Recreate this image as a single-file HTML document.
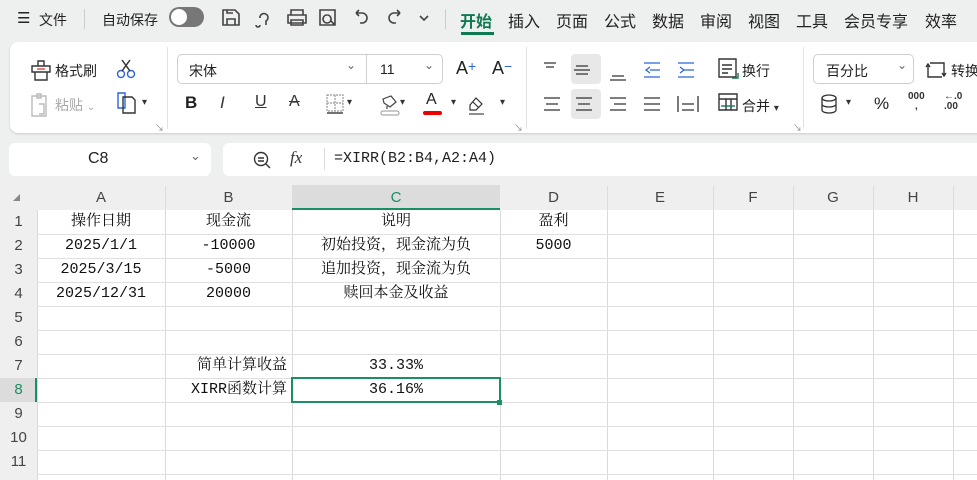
<!DOCTYPE html>
<html><head><meta charset="utf-8"><style>
*{margin:0;padding:0;box-sizing:border-box}
body{width:977px;height:480px;overflow:hidden;background:#eef0ef;font-family:"Liberation Sans","Noto Sans CJK SC",sans-serif;color:#222;position:relative}
.a{position:absolute;white-space:nowrap}
.t{font-size:15px;color:#222}
.ic{position:absolute}
.serif{font-family:"Liberation Mono","Noto Serif CJK SC",serif;font-size:15px;color:#111}
.cell{position:absolute;height:24px;line-height:24px;text-align:center}
.vl{position:absolute;width:1px;background:#dadada;top:210px;height:270px}
.hl{position:absolute;height:1px;background:#e0e0e0;left:37px;width:940px}
.rh{position:absolute;left:0;width:37px;text-align:center;font-size:15px;color:#444;height:24px;line-height:24px}
.ch{position:absolute;top:186px;height:24px;line-height:24px;text-align:center;font-size:15px;color:#444}
.dd{font-size:10px;color:#333}
.tab{position:absolute;top:8px;font-size:16px;color:#222}
</style></head><body>
<!-- top bar -->
<div class="a t" style="left:17px;top:9px;font-size:15px">☰</div>
<div class="a t" style="left:39px;top:10px;font-size:14px">文件</div>
<div class="a" style="left:84px;top:9px;width:1px;height:20px;background:#ccc"></div>
<div class="a t" style="left:102px;top:10px;font-size:14px">自动保存</div>
<div class="a" style="left:169px;top:7px;width:35px;height:20px;border-radius:10px;background:#777"><div style="position:absolute;left:2px;top:2px;width:16px;height:16px;border-radius:8px;background:#fff"></div></div>
<svg class="ic" style="left:220px;top:5px" width="220" height="24" fill="none" stroke="#444" stroke-width="1.6">
<path d="M3 5h12l4 4v11H3z M7 20v-6h8v6 M7 5v3h6"/>
<path d="M40 12a4 4 0 1 1 6 4v4 M40 13v-2 M36 20a2 2 0 1 0 4 0"/>
<path d="M68 10h18v8H68z M71 10V5h12v5 M71 15h12v5H71z"/>
<path d="M100 5h15v15h-15z M107 10a4 4 0 1 0 0.1 0 M111 16l4 4"/>
<path d="M136 8h6a5 5 0 0 1 0 10h-2 M136 8l3-3 M136 8l3 3"/>
<path d="M180 8h-6a5 5 0 0 0 0 10h2 M180 8l-3-3 M180 8l-3 3"/>
<path d="M200 11l4 4 4-4"/>
</svg>
<div class="a" style="left:445px;top:9px;width:1px;height:20px;background:#ccc"></div>
<div class="a" style="left:460px;top:8px;font-size:16px;color:#0e7a52;font-weight:bold">开始</div>
<div class="a" style="left:461px;top:32px;width:33px;height:3px;background:#0e7a52"></div>
<div class="tab" style="left:508px">插入</div>
<div class="tab" style="left:556px">页面</div>
<div class="tab" style="left:604px">公式</div>
<div class="tab" style="left:652px">数据</div>
<div class="tab" style="left:700px">审阅</div>
<div class="tab" style="left:748px">视图</div>
<div class="tab" style="left:796px">工具</div>
<div class="tab" style="left:844px">会员专享</div>
<div class="tab" style="left:925px">效率</div>
<!-- ribbon -->
<div class="a" style="left:10px;top:42px;width:980px;height:91px;background:#fff;border-radius:8px;box-shadow:0 1px 2px rgba(0,0,0,.15)"></div>
<svg class="ic" style="left:30px;top:58px" width="140" height="60" fill="none" stroke="#333" stroke-width="1.4">
<path d="M2 8h18v6H2z M8 8V3h6v5 M5 14v8h12v-8"/><path d="M7 11h8" stroke="#d44"/>
<circle cx="91" cy="16" r="3.5" stroke="#2a66d9"/><circle cx="101" cy="16" r="3.5" stroke="#2a66d9"/><path d="M92 13l8-11 M100 13L92 2"/>
<path d="M2 38h14v20H2z M7 36h4v4H7z M9 46h5v10H9" stroke="#bbb"/>
<path d="M88 35h7v15h-7z" stroke="#2a66d9"/><path d="M93 39h9l3 3v13H93z"/>
</svg>
<div class="a t" style="left:55px;top:61px;font-size:14px">格式刷</div>
<div class="a" style="left:55px;top:95px;font-size:14px;color:#aaa">粘贴 <span style="font-size:10px">⌄</span></div>
<div class="a dd" style="left:142px;top:97px">▾</div>
<div class="a" style="left:155px;top:121px;font-size:9px;color:#888">↘</div>
<div class="a" style="left:167px;top:47px;width:1px;height:82px;background:#e2e2e2"></div>
<div class="a" style="left:177px;top:54px;width:266px;height:30px;border:1px solid #cfcfcf;border-radius:5px"></div>
<div class="a" style="left:366px;top:54px;width:1px;height:30px;background:#cfcfcf"></div>
<div class="a t" style="left:189px;top:61px;font-size:14px">宋体</div>
<div class="a" style="left:346px;top:58px;color:#666;font-size:12px">⌄</div>
<div class="a t" style="left:380px;top:61px;font-size:14px">11</div>
<div class="a" style="left:424px;top:58px;color:#666;font-size:12px">⌄</div>
<div class="a t" style="left:456px;top:58px;font-size:18px">A<span style="color:#2a66d9;font-size:14px;vertical-align:top">+</span></div>
<div class="a t" style="left:492px;top:58px;font-size:18px">A<span style="color:#2a66d9;font-size:14px;vertical-align:top">−</span></div>
<div class="a" style="left:185px;top:93px;font-size:17px;font-weight:bold;color:#222">B</div>
<div class="a" style="left:220px;top:93px;font-size:17px;font-style:italic;color:#333">I</div>
<div class="a" style="left:255px;top:93px;font-size:16px;text-decoration:underline;color:#333">U</div>
<div class="a" style="left:289px;top:93px;font-size:16px;text-decoration:line-through;color:#333">A</div>
<svg class="ic" style="left:325px;top:93px" width="200" height="24" fill="none" stroke="#999" stroke-width="1.2">
<path d="M2 2h16v16H2z M10 2v16 M2 10h16" stroke-dasharray="2 1"/><path d="M2 20h16" stroke="#444" stroke-width="1.5"/>
<path d="M58 6l8-3 5 6-6 5-6-4z M62 13v3" stroke="#444"/><rect x="56" y="18" width="18" height="4" rx="2" stroke="#aaa"/>
<rect x="98" y="18" width="19" height="4" rx="2" fill="#e00" stroke="none"/>
<path d="M145 12l6-7 6 6-6 6h-6z M148 9l6 6" stroke="#333"/><path d="M144 21h15" stroke="#444"/>
</svg>
<div class="a t" style="left:426px;top:91px;font-size:16px">A</div>
<div class="a dd" style="left:347px;top:97px">▾</div><div class="a dd" style="left:400px;top:97px">▾</div><div class="a dd" style="left:451px;top:97px">▾</div><div class="a dd" style="left:500px;top:97px">▾</div>
<div class="a" style="left:514px;top:121px;font-size:9px;color:#888">↘</div>
<div class="a" style="left:526px;top:47px;width:1px;height:82px;background:#e2e2e2"></div>
<div class="a" style="left:571px;top:54px;width:30px;height:30px;background:#e8e8e8;border-radius:4px"></div>
<div class="a" style="left:571px;top:89px;width:30px;height:30px;background:#e8e8e8;border-radius:4px"></div>
<svg class="ic" style="left:540px;top:58px" width="180" height="60" fill="none" stroke="#333" stroke-width="1.3">
<path d="M4 5h12 M6 9h8 M36 8h12 M34 12h16 M36 16h12 M72 18h12 M70 22h16"/>
<path d="M104 5h16 M110 12h10 M104 19h16 M110 9l-4 3 4 3" stroke="#2a66d9"/>
<path d="M138 5h16 M144 12h10 M138 19h16 M140 9l4 3-4 3" stroke="#2a66d9"/>
<path d="M4 40h16 M6 46h12 M4 52h16 M36 40h16 M38 46h12 M36 52h16 M70 40h16 M74 46h12 M70 52h16 M104 40h16 M104 46h16 M104 52h16 M138 38v16 M158 38v16 M142 52h12 M142 46h12"/>
</svg>
<svg class="ic" style="left:716px;top:56px" width="30" height="60" fill="none" stroke="#333" stroke-width="1.4">
<path d="M3 3h17v18H3z M6 9h10 M6 13h10 M6 17h6"/><path d="M16 22h6v-5" stroke="#0e7a52"/>
<path d="M3 38h18v16H3z M3 43h18 M10 43v11 M15 43v11"/><path d="M5 50h14" stroke="#0e7a52"/>
</svg>
<div class="a t" style="left:742px;top:61px;font-size:14px">换行</div>
<div class="a t" style="left:742px;top:96px;font-size:14px">合并 <span class="dd">▾</span></div>
<div class="a" style="left:793px;top:121px;font-size:9px;color:#888">↘</div>
<div class="a" style="left:803px;top:47px;width:1px;height:82px;background:#e2e2e2"></div>
<div class="a" style="left:813px;top:54px;width:101px;height:30px;border:1px solid #cfcfcf;border-radius:5px"></div>
<div class="a t" style="left:826px;top:61px;font-size:14px">百分比</div>
<div class="a" style="left:897px;top:58px;color:#666;font-size:12px">⌄</div>
<svg class="ic" style="left:925px;top:59px" width="22" height="22" fill="none" stroke="#333" stroke-width="1.4"><path d="M5 4h14v12 M17 14l2 3 2-3 M17 18H3V6 M1 8l2-3 2 3"/></svg>
<div class="a t" style="left:951px;top:61px;font-size:14px">转换</div>
<svg class="ic" style="left:820px;top:94px" width="20" height="22" fill="none" stroke="#333" stroke-width="1.3"><ellipse cx="9" cy="4" rx="7" ry="3"/><path d="M2 4v12c0 4 14 4 14 0V4 M2 10c0 4 14 4 14 0"/></svg>
<div class="a dd" style="left:846px;top:97px">▾</div>
<div class="a t" style="left:874px;top:94px;font-size:17px">%</div>
<div class="a" style="left:908px;top:92px;font-size:10px;font-weight:bold;color:#333;line-height:10px;text-align:center">000<br>,</div>
<div class="a" style="left:944px;top:92px;font-size:10px;font-weight:bold;color:#333;line-height:10px">←.0<br>.00</div>
<!-- formula bar -->
<div class="a" style="left:9px;top:143px;width:202px;height:33px;background:#fff;border-radius:6px"></div>
<div class="a" style="left:88px;top:150px;font-size:16px;color:#222">C8</div>
<div class="a" style="left:190px;top:148px;color:#666;font-size:13px">⌄</div>
<div class="a" style="left:223px;top:143px;width:760px;height:33px;background:#fff;border-radius:6px 0 0 6px"></div>
<svg class="ic" style="left:252px;top:150px" width="20" height="20" fill="none" stroke="#333" stroke-width="1.4"><circle cx="9" cy="9" r="6.5"/><path d="M6 8h6 M6 11h6 M14 14l4 4"/></svg>
<div class="a" style="left:290px;top:148px;font-size:17px;font-style:italic;font-family:'Liberation Serif',serif;color:#333">fx</div>
<div class="a" style="left:324px;top:148px;width:1px;height:22px;background:#ddd"></div>
<div class="a" style="left:334px;top:150px;font-family:'Liberation Mono',monospace;font-size:15px;color:#222">=XIRR(B2:B4,A2:A4)</div>
<!-- grid -->
<div class="a" style="left:0;top:177px;width:977px;height:33px;background:#efefef"></div>
<div class="a" style="left:0;top:210px;width:37px;height:270px;background:#efefef"></div>
<div class="a" style="left:37px;top:210px;width:940px;height:270px;background:#fff"></div>
<div class="a" style="left:292px;top:185px;width:208px;height:25px;background:#dcdcdc"></div>
<div class="a" style="left:292px;top:208px;width:208px;height:2px;background:#1a8f62"></div>
<div class="a" style="left:0;top:378px;width:37px;height:24px;background:#dcdcdc"></div>
<div class="a" style="left:35px;top:378px;width:2px;height:24px;background:#1a8f62"></div>
<div class="a" style="left:13px;top:194px;width:0;height:0;border-left:7px solid transparent;border-bottom:7px solid #888"></div>
<div class="ch" style="left:37px;width:128px">A</div>
<div class="ch" style="left:165px;width:127px">B</div>
<div class="ch" style="left:292px;width:208px;color:#1a8f62">C</div>
<div class="ch" style="left:500px;width:107px">D</div>
<div class="ch" style="left:607px;width:106px">E</div>
<div class="ch" style="left:713px;width:80px">F</div>
<div class="ch" style="left:793px;width:80px">G</div>
<div class="ch" style="left:873px;width:80px">H</div>
<div class="a" style="left:165px;top:186px;width:1px;height:24px;background:#ddd"></div>
<div class="a" style="left:607px;top:186px;width:1px;height:24px;background:#ddd"></div>
<div class="a" style="left:713px;top:186px;width:1px;height:24px;background:#ddd"></div>
<div class="a" style="left:793px;top:186px;width:1px;height:24px;background:#ddd"></div>
<div class="a" style="left:873px;top:186px;width:1px;height:24px;background:#ddd"></div>
<div class="a" style="left:953px;top:186px;width:1px;height:24px;background:#ddd"></div>
<div class="vl" style="left:37px"></div><div class="vl" style="left:165px"></div><div class="vl" style="left:292px"></div><div class="vl" style="left:500px"></div><div class="vl" style="left:607px"></div><div class="vl" style="left:713px"></div><div class="vl" style="left:793px"></div><div class="vl" style="left:873px"></div><div class="vl" style="left:953px"></div>
<div class="hl" style="top:234px"></div><div class="hl" style="top:258px"></div><div class="hl" style="top:282px"></div><div class="hl" style="top:306px"></div><div class="hl" style="top:330px"></div><div class="hl" style="top:354px"></div><div class="hl" style="top:378px"></div><div class="hl" style="top:402px"></div><div class="hl" style="top:426px"></div><div class="hl" style="top:450px"></div><div class="hl" style="top:474px"></div>
<div class="rh" style="top:210px">1</div><div class="rh" style="top:234px">2</div><div class="rh" style="top:258px">3</div><div class="rh" style="top:282px">4</div><div class="rh" style="top:306px">5</div><div class="rh" style="top:330px">6</div><div class="rh" style="top:354px">7</div><div class="rh" style="top:378px;color:#1a8f62">8</div><div class="rh" style="top:402px">9</div><div class="rh" style="top:426px">10</div><div class="rh" style="top:450px">11</div>
<div class="cell serif" style="left:37px;width:128px;top:210px">操作日期</div>
<div class="cell serif" style="left:165px;width:127px;top:210px">现金流</div>
<div class="cell serif" style="left:292px;width:208px;top:210px">说明</div>
<div class="cell serif" style="left:500px;width:107px;top:210px">盈利</div>
<div class="cell serif" style="left:37px;width:128px;top:234px">2025/1/1</div>
<div class="cell serif" style="left:165px;width:127px;top:234px">-10000</div>
<div class="cell serif" style="left:292px;width:208px;top:234px">初始投资，现金流为负</div>
<div class="cell serif" style="left:500px;width:107px;top:234px">5000</div>
<div class="cell serif" style="left:37px;width:128px;top:258px">2025/3/15</div>
<div class="cell serif" style="left:165px;width:127px;top:258px">-5000</div>
<div class="cell serif" style="left:292px;width:208px;top:258px">追加投资，现金流为负</div>
<div class="cell serif" style="left:37px;width:128px;top:282px">2025/12/31</div>
<div class="cell serif" style="left:165px;width:127px;top:282px">20000</div>
<div class="cell serif" style="left:292px;width:208px;top:282px">赎回本金及收益</div>
<div class="cell serif" style="left:165px;width:122px;top:354px;text-align:right">简单计算收益</div>
<div class="cell serif" style="left:292px;width:208px;top:354px">33.33%</div>
<div class="cell serif" style="left:165px;width:122px;top:378px;text-align:right">XIRR函数计算</div>
<div class="cell serif" style="left:292px;width:208px;top:378px">36.16%</div>
<div class="a" style="left:291px;top:377px;width:210px;height:26px;border:2px solid #1a8f62"></div>
<div class="a" style="left:497px;top:400px;width:5px;height:5px;background:#1a8f62"></div>
</body></html>
